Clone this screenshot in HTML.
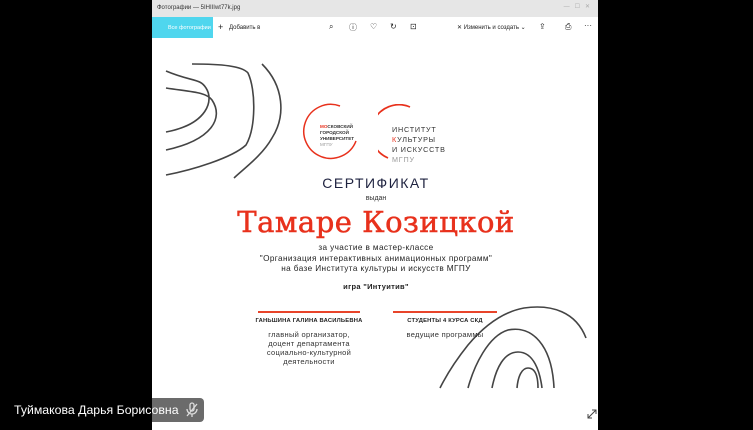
<!DOCTYPE html><html><head><meta charset="utf-8"><style>
*{margin:0;padding:0;box-sizing:border-box}
body{width:753px;height:430px;background:#000;position:relative;overflow:hidden;font-family:"Liberation Sans",sans-serif}
.win{position:absolute;left:152px;top:0;width:446px;height:430px;background:#fff}
.title{position:absolute;left:0;top:0;width:446px;height:17px;background:#e6e6e6;font-size:6px;color:#333;padding:5px 0 0 5px}
.tb{position:absolute;left:0;top:17px;width:446px;height:21px;background:#fff;font-size:6px;color:#222}
.cy{position:absolute;left:0;top:0;width:61px;height:21px;background:#4fd6ee;color:#fff;padding:8px 0 0 16px;font-size:5.5px}
.t{position:absolute;white-space:nowrap}
.c{position:absolute;text-align:center;white-space:nowrap;transform:translateX(-50%)}
</style></head><body>
<div class="win">
<div class="title">Фотографии — 5IHIIIwt77k.jpg<span style="position:absolute;right:8px;top:3px;color:#aaa">—&nbsp;&nbsp;&nbsp;☐&nbsp;&nbsp;&nbsp;✕</span></div>
<div class="tb"><div class="cy">Все фотографии</div>
<span class="t" style="left:66px;top:5px;font-size:9px">+</span><span class="t" style="left:77px;top:8px">Добавить в</span>
<span class="t" style="left:177px;top:5px;font-size:8px">⌕</span><span class="t" style="left:197px;top:5px;font-size:8px">ⓘ</span><span class="t" style="left:218px;top:5px;font-size:8px">♡</span><span class="t" style="left:238px;top:5px;font-size:8px">↻</span><span class="t" style="left:258px;top:5px;font-size:8px">⊡</span>
<span class="t" style="left:305px;top:7px">✕ Изменить и создать ⌄</span><span class="t" style="left:387px;top:5px;font-size:8px">⇪</span><span class="t" style="left:413px;top:5px;font-size:8px">⎙</span><span class="t" style="left:432px;top:4px;font-size:8px">···</span></div>
<svg style="position:absolute;left:0;top:0" width="446" height="430" fill="none" stroke="#444" stroke-width="1.6">
<path d="M14 71 C40 82 48 78 54 88 C62 100 56 124 14 132"/>
<path d="M14 88 C40 92 54 92 60 100 C72 118 60 140 14 150"/>
<path d="M40 64 C70 64 90 66 96 73 C104 90 104 128 94 145 C80 158 40 170 14 175"/>
<path d="M110 64 C132 86 134 116 120 138 C110 156 90 170 82 178"/>
<path d="M288 388 C296 372 304 360 316 345 C332 326 350 312 372 308 C400 304 424 312 434 338"/>
<path d="M316 388 C322 366 336 336 356 330 C380 325 400 345 402 388"/>
<path d="M340 388 C344 368 352 352 366 352 C382 352 388 372 390 388"/>
<path d="M365 388 C366 376 370 368 376 368 C384 368 386 378 386 388"/>
<path d="M436 418 L444 410 M440 410 h4 v4 M436 414 v4 h4" stroke-width="1"/>
</svg>
<svg style="position:absolute;left:148px;top:103px" width="60" height="60" fill="none" stroke="#e8311c" stroke-width="1.5"><path d="M40 3 A27 27 0 1 0 56 38"/></svg>
<div class="t" style="left:168px;top:124px;font-size:4.6px;font-weight:bold;color:#333;line-height:6px"><span style="color:#e8311c">МО</span>СКОВСКИЙ<br>ГОРОДСКОЙ<br>УНИВЕРСИТЕТ<br><span style="color:#999;font-weight:normal">МГПУ</span></div>
<svg style="position:absolute;left:226px;top:104px" width="60" height="60" fill="none" stroke="#e8311c" stroke-width="1.7"><path d="M32 3 A27 27 0 0 0 10 54"/></svg>
<div class="t" style="left:240px;top:125px;font-size:7.2px;color:#333;letter-spacing:0.8px;line-height:10px">ИНСТИТУТ<br><span style="color:#e8311c">К</span>УЛЬТУРЫ<br>И ИСКУССТВ<br><span style="color:#999">МГПУ</span></div>
<div class="c" style="left:224px;top:175px;font-size:14px;color:#1f2340;letter-spacing:1.5px">СЕРТИФИКАТ</div>
<div class="c" style="left:224px;top:195px;font-size:7px;color:#333">выдан</div>
<div class="c" style="left:224px;top:205px;font-family:'DejaVu Serif',serif;font-size:29px;color:#e8311c;letter-spacing:0.5px;-webkit-text-stroke:0.5px #e8311c">Тамаре Козицкой</div>
<div class="c" style="left:224px;top:243px;font-size:8.2px;letter-spacing:0.4px;color:#222;line-height:10.5px;text-align:center">за участие в мастер-классе<br>"Организация интерактивных анимационных программ"<br>на базе Института культуры и искусств МГПУ</div>
<div class="c" style="left:224px;top:282px;font-size:7.5px;font-weight:bold;color:#222;letter-spacing:0.3px">игра "Интуитив"</div>
<div class="t" style="left:106px;top:311px;width:102px;height:2px;background:#e8442a"></div>
<div class="t" style="left:241px;top:311px;width:104px;height:2px;background:#e8442a"></div>
<div class="c" style="left:157px;top:318px;font-size:5.8px;font-weight:bold;color:#222;letter-spacing:0.2px">ГАНЬШИНА ГАЛИНА ВАСИЛЬЕВНА</div>
<div class="c" style="left:157px;top:330px;font-size:7.5px;letter-spacing:0.3px;color:#333;line-height:9px;text-align:center">главный организатор,<br>доцент департамента<br>социально-культурной<br>деятельности</div>
<div class="c" style="left:293px;top:318px;font-size:5.8px;font-weight:bold;color:#222;letter-spacing:0.2px">СТУДЕНТЫ 4 КУРСА СКД</div>
<div class="c" style="left:293px;top:330px;font-size:7.5px;letter-spacing:0.3px;color:#333">ведущие программы</div>
</div>
<div style="position:absolute;left:152px;top:398px;width:52px;height:24px;background:#6b6b6b;border-radius:0 4px 4px 0"></div>
<div class="t" style="left:14px;top:403px;font-size:12.3px;color:#fff">Туймакова Дарья Борисовна</div>
<svg style="position:absolute;left:185px;top:402px" width="14" height="16" fill="none" stroke="#ddd" stroke-width="1.3"><rect x="5" y="1" width="4" height="8" rx="2"/><path d="M2 7 a5 5 0 0 0 10 0 M7 12 v3 M2 14 L12 2"/></svg>
</body></html>
